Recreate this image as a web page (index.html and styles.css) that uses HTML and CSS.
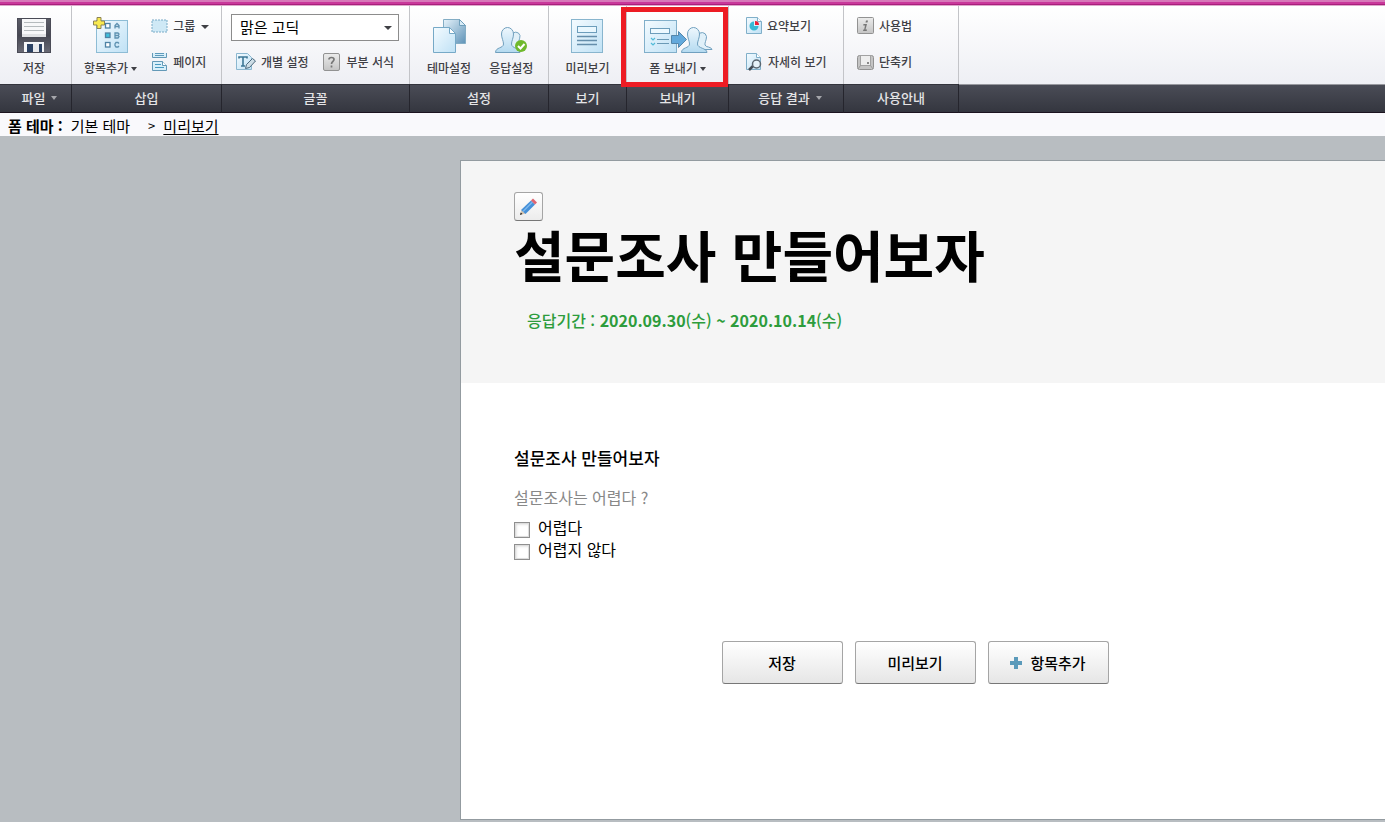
FILE: index.html
```html
<!DOCTYPE html>
<html lang="ko">
<head>
<meta charset="utf-8">
<title>설문조사 만들어보자</title>
<link rel="stylesheet" href="styles.css">
</head>
<body>
<svg class="defs" width="0" height="0" aria-hidden="true">
  <defs>
    <linearGradient id="paper" x1="0" y1="0" x2="1" y2="1"><stop offset="0" stop-color="#f4fbff"/><stop offset="1" stop-color="#bfe1f5"/></linearGradient>
    <linearGradient id="back" x1="0" y1="0" x2="1" y2="1"><stop offset="0" stop-color="#e6f3fb"/><stop offset="1" stop-color="#5f93b8"/></linearGradient>
    <linearGradient id="disk" x1="0" y1="0" x2="0" y2="1"><stop offset="0" stop-color="#5c5d68"/><stop offset=".5" stop-color="#454651"/><stop offset="1" stop-color="#696a75"/></linearGradient>
    <linearGradient id="grey" x1="0" y1="0" x2="0" y2="1"><stop offset="0" stop-color="#ececec"/><stop offset="1" stop-color="#c4c4c4"/></linearGradient>
    <linearGradient id="person" x1="0" y1="0" x2="0" y2="1"><stop offset="0" stop-color="#eef7fd"/><stop offset="1" stop-color="#b4daf0"/></linearGradient>
  </defs>
</svg>
<header class="ribbon">
  <section class="group g-file">
    <div class="tools center">
      <button class="big" type="button">
        <svg width="36" height="38" viewBox="0 0 36 38"><rect x="1.500" y="2.500" width="33" height="34" fill="url(#disk)" stroke="#4a4b56"/><path d="M6 3h24v17H6z" fill="#f7f7f9"/><path d="M8 6.500h20M8 10.500h20M8 14.500h20" stroke="#b5babd"/><path d="M6 18h24v3H6z" fill="#e1e2e5"/><path d="M8 26h20v10H8z" fill="#f5f6f8"/><path d="M11 28h6v8h-6z" fill="#2b4163"/><path d="M21 28h5v8h-5z" fill="#2b4163"/><path d="M17 28h6v8h-6z" fill="#e8e9ec"/></svg>
        <span>저장</span>
      </button>
    </div>
    <h2 class="caption menu">파일<i class="caret light"></i></h2>
  </section>
  <section class="group g-insert">
    <div class="tools">
      <button class="big" type="button">
        <svg width="38" height="38" viewBox="0 0 38 38"><rect x="4.500" y="4.500" width="31" height="32" fill="url(#paper)" stroke="#8dbcd5"/><g fill="#fff" stroke="#4d83a5" stroke-width="1.300"><rect x="13.500" y="7.500" width="4.500" height="4.500"/><rect x="13.500" y="17" width="4.500" height="4.500" fill="#3ec0dc"/><rect x="13.500" y="26.500" width="4.500" height="4.500"/></g><g fill="none" stroke="#5e91b0" stroke-width="1.300"><path d="M23 12.500V9.500l2-2 2 2v3M23 10.500h4"/><path d="M23 17h3l1 1-1 1.500h-3zM23 19.500h3l1 1-1 1.500h-3z"/><path d="M27 27.500l-1-1h-2l-1 1.500v1.500l1 1.500h2l1-1"/></g><path d="M5 1.500h4v3.500h3.500v4H9v3.500H5V9H1.500V5H5z" fill="#f8e94f" stroke="#8d8354"/></svg>
        <span>항목추가<i class="caret"></i></span>
      </button>
      <div class="stack">
        <button class="small" type="button"><svg width="17" height="16" viewBox="0 0 17 16"><rect x="1" y="2" width="15" height="12" fill="#cfe9f6"/><rect x="1" y="2" width="15" height="12" fill="none" stroke="#78abc7" stroke-dasharray="2 1"/></svg><span>그룹<i class="caret wide"></i></span></button>
        <button class="small" type="button"><svg width="17" height="20" viewBox="0 0 17 20"><path d="M1.500 1v4.500h14V1" fill="#d8effa" stroke="#6399b7"/><path d="M4 1.500h9M4 3.500h9" stroke="#5d9abb"/><path d="M1.500 18.500v-9h10l4 4v5z" fill="#d8effa" stroke="#6399b7"/><path d="M11.500 9.500v4h4" fill="#fff" stroke="#6399b7"/><path d="M4 12.500h6M4 15.500h9" stroke="#499ac0"/></svg><span>페이지</span></button>
      </div>
    </div>
    <h2 class="caption">삽입</h2>
  </section>
  <section class="group g-font">
    <div class="tools stack">
      <div class="picker">
        <select aria-label="글꼴"><option>맑은 고딕</option></select>
        <i class="caret wide"></i>
      </div>
      <div class="pair">
        <button class="small" type="button"><svg width="20" height="18" viewBox="0 0 20 18"><path d="M.5.500h11l4 4v12H.5z" fill="url(#paper)" stroke="#8bb7d0"/><path d="M3 5.500V4h8v1.500M7 4v9M5 13h4" fill="none" stroke="#3c7796" stroke-width="1.600"/><path d="M9.500 15.500l1-4 6-6 3 2.500-6 6.500z" fill="#cddde6" stroke="#49677c"/></svg><span>개별 설정</span></button>
        <button class="small help" type="button"><svg width="18" height="18" viewBox="0 0 18 18"><rect x=".5" y=".5" width="16" height="17" rx="1.500" fill="url(#grey)" stroke="#929292"/><path d="M6 6.500q0-2 2.500-2t2.500 2q0 1-1.200 2T8.500 11M8.500 12.500v2" fill="none" stroke="#777" stroke-width="1.700"/></svg><span>부분 서식</span></button>
      </div>
    </div>
    <h2 class="caption">글꼴</h2>
  </section>
  <section class="group g-set">
    <div class="tools">
      <button class="big" type="button">
        <svg width="36" height="38" viewBox="0 0 36 38"><path d="M12.500 3.500h16l6 6v18h-22z" fill="url(#back)" stroke="#83adc5"/><path d="M28.500 3.500v6h6z" fill="#d9ecf7" stroke="#6f9fbb"/><path d="M2.500 11.500h16l6 6v19h-22z" fill="url(#paper)" stroke="#76a9c7"/><path d="M18.500 11.500v6h6z" fill="#fff" stroke="#76a9c7"/></svg>
        <span>테마설정</span>
      </button>
      <button class="big" type="button">
        <svg width="36" height="38" viewBox="0 0 36 38"><path d="M17 36v-9l1.500-7.500a4.500 5 0 0 1 8.500 0c0 4-2 6-1.500 9l1.500 7.500z" fill="#e1f0f8" stroke="#76a6c3"/><path d="M2.500 36.500c0-5.500 8-4 8-8.500 0-3-2-6-2-10a6 6.500 0 0 1 12 0c0 4-2 7-2 10 0 4.500 8.500 4 8.500 8.500z" fill="url(#person)" stroke="#709fbd"/><circle cx="28" cy="30" r="6" fill="#6fb92c"/><path d="M25 30l2.500 2.500 4-4.500" stroke="#fff" stroke-width="2" fill="none"/></svg>
        <span>응답설정</span>
      </button>
    </div>
    <h2 class="caption">설정</h2>
  </section>
  <section class="group g-view">
    <div class="tools center">
      <button class="big" type="button">
        <svg width="34" height="38" viewBox="0 0 34 38"><rect x="1.500" y="3.500" width="31" height="33" fill="url(#paper)" stroke="#88b5ce"/><rect x="7.500" y="10.500" width="19" height="6" fill="#e9f7fe" stroke="#6c9dbb"/><path d="M7 20.500h20M7 24.500h20M7 28.500h20" stroke="#648eab" stroke-width="1.300"/></svg>
        <span>미리보기</span>
      </button>
    </div>
    <h2 class="caption">보기</h2>
  </section>
  <section class="group g-send">
    <div class="tools center">
      <button class="big" type="button">
        <svg width="70" height="38" viewBox="0 0 70 38"><rect x="1.500" y="4.500" width="32" height="32" fill="url(#paper)" stroke="#81afca"/><rect x="7.500" y="12.500" width="19" height="5" fill="#edf9ff" stroke="#6c9dbb"/><path d="M8 22l2 2 2-2M8 27l2 2 2-2" fill="none" stroke="#52bbd8" stroke-width="1.200"/><path d="M14 23.500h12M14 27.500h12" stroke="#6b9ab6"/><path d="M54 33.500l1-14a4.500 5 0 0 1 8.500 1c0 4-2 6-1.500 8.500.5 2.500 6.500 1.500 7 4.500z" fill="#e0f0f9" stroke="#70a0bf"/><path d="M38.500 36.500c0-5.500 8-4 8-8.500 0-3-2-6-2-10a6 6.500 0 0 1 12 0c0 4-2 7-2 10 0 4.500 9.500 4 9.500 8.500z" fill="url(#person)" stroke="#70a0bf"/><path d="M28.500 19.500h7v-4l8 8-8 8v-4h-7z" fill="#63a9dc" stroke="#5486aa"/></svg>
        <span>폼 보내기<i class="caret"></i></span>
      </button>
      <div class="highlight"></div>
    </div>
    <h2 class="caption">보내기</h2>
  </section>
  <section class="group g-result">
    <div class="tools stack">
      <button class="small" type="button"><svg width="16" height="18" viewBox="0 0 16 18"><path d="M.5.500h11l4 4v12H.5z" fill="url(#paper)" stroke="#80afc9"/><path d="M11.500.500v4h4" fill="#fff" stroke="#80afc9"/><path d="M8 9V4.500a4.500 4.500 0 1 0 4.500 4.500z" fill="#36b9d5"/><path d="M9 8V4A4 4 0 0 1 13 8z" fill="#e92236"/></svg><span>요약보기</span></button>
      <button class="small" type="button"><svg width="17" height="18" viewBox="0 0 17 18"><path d="M.5.500h10l4 4v12H.5z" fill="url(#paper)" stroke="#80afc9"/><path d="M10.500.500v4h4" fill="#fff" stroke="#80afc9"/><path d="M3 17l4-4" stroke="#444c55" stroke-width="2.500"/><circle cx="10.500" cy="11" r="4" fill="#e6f3fa" stroke="#596670" stroke-width="1.500"/></svg><span>자세히 보기</span></button>
    </div>
    <h2 class="caption menu">응답 결과<i class="caret light"></i></h2>
  </section>
  <section class="group g-help">
    <div class="tools stack">
      <button class="small" type="button"><svg width="17" height="18" viewBox="0 0 17 18"><rect x=".5" y=".5" width="16" height="16" rx="1" fill="url(#grey)" stroke="#929292"/><path d="M9 3.500h2l-.5 2h-2zM6.500 7h3.500l-1.500 5.500H10l-.3 1.500H6l.4-1.500h.8L8 8.500H6.200z" fill="#777"/></svg><span>사용법</span></button>
      <button class="small" type="button"><svg width="17" height="17" viewBox="0 0 17 17"><rect x=".5" y="1.500" width="16" height="14" rx="2" fill="#c4c4c4" stroke="#929292"/><rect x="3.500" y="1.500" width="10" height="10" fill="#eee" stroke="#a2a2a2"/><path d="M1 15l2.500-3.500M16 15l-2.500-3.500" stroke="#999"/><path d="M10 8h2v2h-2z" fill="#888"/></svg><span>단축키</span></button>
    </div>
    <h2 class="caption">사용안내</h2>
  </section>
  <div class="group rest"><div class="tools"></div><div class="caption"></div></div>
</header>
<nav class="themebar"><b>폼 테마 :</b><span>기본 테마</span><span class="sep">&gt;</span><a href="#">미리보기</a></nav>
<main class="sheet">
  <header class="head">
    <button class="edit" type="button" aria-label="제목 편집"><svg width="19" height="19" viewBox="0 0 19 19"><path d="M1 18l1.500-5 4 3.500z" fill="#d8c6b0"/><path d="M1 18l.7-2.500 1.800 1.500z" fill="#222"/><path d="M2 13L12 3.500 16 7.500 6.500 17z" fill="#4590d8"/><path d="M4 14.500l9.500-9.500" stroke="#7bb7ec" stroke-width="1.500"/><path d="M12 3.500L14 1.500 18 5.500l-2 2z" fill="#de6470"/></svg></button>
    <h1>설문조사 만들어보자</h1>
    <p class="period">응답기간 : <b>2020.09.30</b>(수) <b>~ 2020.10.14</b>(수)</p>
  </header>
  <form class="survey">
    <h3>설문조사 만들어보자</h3>
    <p class="question">설문조사는 어렵다 ?</p>
    <label class="choice"><input type="checkbox"><span>어렵다</span></label>
    <label class="choice"><input type="checkbox"><span>어렵지 않다</span></label>
    <div class="actions">
      <button type="button">저장</button>
      <button type="button">미리보기</button>
      <button type="button"><svg width="12" height="12" viewBox="0 0 12 12"><path d="M4 0h4v4h4v4H8v4H4V8H0V4h4z" fill="#5b9aba"/></svg>항목추가</button>
    </div>
  </form>
</main>
</body>
</html>
```
FILE: styles.css
```css
* { box-sizing: border-box; }
html { min-height: 100%; background: #b8bdc1; }
body {
  margin: 0;
  color: #000;
  font-family: "Noto Sans CJK KR", sans-serif;
  font-size: 15px;
}
h1, h2, h3, p { margin: 0; }
button, select, input { font: inherit; color: inherit; margin: 0; }
.defs { display: block; }
svg { display: block; flex: none; }

/* ribbon */
.ribbon { display: flex; padding-top: 6px; background: linear-gradient(#d778b9 0 2px, #c9389b 2px 4px, #a91f7c 4px 5px, #dda9cb 5px 6px, #fff 6px); }
.group { flex: none; }
.tools {
  position: relative;
  display: flex;
  height: 78px;
  border-right: 1px solid #c3c4c8;
  background: linear-gradient(#fff, #eeeff4);
}
.tools.center { justify-content: center; }
.stack { display: flex; flex-direction: column; padding-top: 2px; }
.caption {
  display: flex;
  align-items: center;
  justify-content: center;
  height: 29px;
  padding-bottom: 2px;
  border-top: 1px solid #33343c;
  border-right: 1px solid #25252d;
  border-bottom: 1px solid #1c1420;
  background: linear-gradient(#4a4c56, #34363f);
  color: #e4e4e6;
  font-size: 13px;
  font-weight: 500;
}
.caption.menu { padding-left: 8px; }
.g-file { width: 72px; }
.g-insert { width: 150px; }
.g-font { width: 188px; }
.g-set { width: 139px; }
.g-view { width: 78px; }
.g-send { width: 102px; }
.g-result, .g-help { width: 115px; }
.rest { flex: 1; }
.rest .tools, .rest .caption { border-right: 0; }
.rest .caption { border-top-color: #97989e; }

.big, .small {
  display: flex;
  align-items: center;
  padding: 0;
  border: 0;
  background: none;
  color: #3f4045;
  font-size: 12px;
  font-weight: 500;
  line-height: 20px;
  white-space: nowrap;
}
.big { flex-direction: column; padding-top: 10px; gap: 4px; }
.small { height: 36px; gap: 5px; }
.g-file .big { padding-right: 3px; }
.g-insert .tools { padding-left: 12px; gap: 14px; }
.g-set .tools { padding-left: 17px; gap: 18px; }
.g-result .tools { padding-left: 17px; }
.g-help .tools { padding-left: 13px; }
.g-font .tools { padding: 8px 10px 0 9px; gap: 3px; }

.caret {
  display: inline-block;
  margin-left: 3px;
  border: 3px solid transparent;
  border-top: 4px solid #3f4045;
  border-bottom: 0;
  vertical-align: 2px;
}
.caret.wide { margin-left: 6px; border-width: 4px 4px 0; }
.caret.light { margin-left: 6px; border-top-color: #a5a6ab; }

.picker { position: relative; }
.picker select {
  display: block;
  width: 100%;
  height: 27px;
  padding: 0 24px 3px 8px;
  border: 1px solid #8c8c8c;
  border-radius: 0;
  appearance: none;
  background: #fff;
}
.picker .caret { position: absolute; right: 7px; top: 12px; pointer-events: none; }
.pair { display: flex; justify-content: space-between; padding: 0 5px; }
.highlight { position: absolute; inset: 1px 0 -3px -6px; border: 5px solid #ed1c24; z-index: 1; }

/* theme path */
.themebar {
  display: flex;
  align-items: center;
  height: 23px;
  padding: 3px 8px 0;
  gap: 8px;
  background: #f9f9fc;
  font-size: 15px;
  line-height: 20px;
}
.themebar .sep { margin-left: 10px; font-size: 13px; }
.themebar a { color: inherit; text-underline-offset: 2px; }

/* form sheet */
.sheet {
  min-height: 660px;
  margin: 24px 0 2px 460px;
  border: 1px solid #939ba0;
  border-right: 0;
  background: #fff;
}
.head { padding: 31px 53px 53px; background: #f5f5f5; }
.edit {
  display: grid;
  place-items: center;
  width: 29px;
  height: 29px;
  padding: 0;
  border: 1px solid #a5a5a5;
  border-bottom-color: #777;
  border-radius: 3px;
  background: linear-gradient(#fff, #ececec);
}
h1 { font-size: 55px; line-height: 64px; font-weight: 700; }
.period { padding: 25px 13px 0; color: #2d9c3c; font-size: 16px; line-height: 20px; font-weight: 500; }
.survey { max-width: 908px; padding: 63px 53px 0; }
h3 { font-size: 17px; line-height: 24px; font-weight: 500; }
.question { padding: 16px 0 8px; color: #888; font-size: 16px; line-height: 22px; }
.choice { display: flex; align-items: center; gap: 8px; font-size: 16px; line-height: 22px; }
.choice input {
  width: 16px;
  height: 16px;
  margin-top: 6px;
  border: 1px solid #8f8f8f;
  appearance: none;
  background: #fff;
  box-shadow: inset 0 0 0 1px #ddd, inset 1px 1px 3px #ccc;
}
.actions { display: flex; justify-content: center; gap: 12px; padding-top: 81px; }
.actions button {
  display: flex;
  align-items: center;
  justify-content: center;
  gap: 8px;
  width: 121px;
  height: 43px;
  padding: 0;
  border: 1px solid #a5a5a5;
  border-bottom-color: #777;
  border-radius: 3px;
  background: linear-gradient(#fff, #e6e6e6);
  font-weight: 500;
}
```
